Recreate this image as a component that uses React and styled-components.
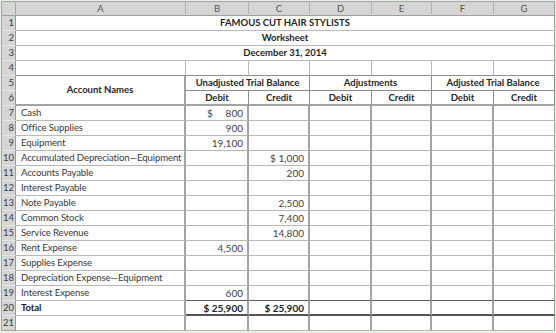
import React from "react";
import styled, { createGlobalStyle } from "styled-components";

const GlobalStyle = createGlobalStyle`
  html, body {
    margin: 0;
    background: #e5f1e1;
  }
  body {
    padding: 1px 0 0 1px;
    font-family: Lato, "Open Sans", sans-serif;
  }
`;

const columns = ["A", "B", "C", "D", "E", "F", "G"];

const accounts = [
  { name: "Cash", debit: "800", debitSign: true },
  { name: "Office Supplies", debit: "900" },
  { name: "Equipment", debit: "19,100" },
  { name: "Accumulated Depreciation—Equipment", credit: "1,000", creditSign: true },
  { name: "Accounts Payable", credit: "200" },
  { name: "Interest Payable" },
  { name: "Note Payable", credit: "2,500" },
  { name: "Common Stock", credit: "7,400" },
  { name: "Service Revenue", credit: "14,800" },
  { name: "Rent Expense", debit: "4,500" },
  { name: "Supplies Expense" },
  { name: "Depreciation Expense—Equipment" },
  { name: "Interest Expense", debit: "600" },
];

const lineColor = {
  thin: "1px solid #b9b9b9",
  head: "1px solid #8e8e8e",
  underline: "1px solid #5c5c5c",
  total: "2px solid #555",
  split: "2px solid #a3a3a3",
};

function Amount({ value, sign, bold, last, rule }) {
  return (
    <Num $bold={bold} $last={last} $rule={rule} $sign={sign}>
      {sign && <span>$</span>}
      <span>{value}</span>
    </Num>
  );
}

function DataRow({ n, account, rule }) {
  return (
    <>
      <RowNum>{n}</RowNum>
      <Label $rule="thin">{account.name}</Label>
      <Amount value={account.debit} sign={account.debitSign} rule={rule} />
      <Amount value={account.credit} sign={account.creditSign} rule={rule} />
      <Num $rule={rule} />
      <Num $rule={rule} />
      <Num $rule={rule} />
      <Num $rule={rule} $last />
    </>
  );
}

export default function App() {
  return (
    <>
      <GlobalStyle />
      <Sheet>
        <Corner />
        {columns.map((c, i) => (
          <ColHead key={c} $last={i === columns.length - 1}>
            {c}
          </ColHead>
        ))}

        <RowNum>1</RowNum>
        <Title>FAMOUS CUT HAIR STYLISTS</Title>
        <RowNum>2</RowNum>
        <Title>Worksheet</Title>
        <RowNum>3</RowNum>
        <Title>December 31, 2014</Title>

        <RowNum>4</RowNum>
        {columns.map((c, i) => (
          <Blank key={c} $last={i === columns.length - 1} />
        ))}

        <RowNum>5</RowNum>
        <Head $rows={2} $wide>Account Names</Head>
        <Head $span={2}>Unadjusted Trial Balance</Head>
        <Head $span={2}>Adjustments</Head>
        <Head $span={2} $last>Adjusted Trial Balance</Head>

        <RowNum>6</RowNum>
        <Head $sub>Debit</Head>
        <Head $sub>Credit</Head>
        <Head $sub>Debit</Head>
        <Head $sub>Credit</Head>
        <Head $sub>Debit</Head>
        <Head $sub $last>Credit</Head>

        {accounts.map((a, i) => (
          <DataRow
            key={a.name}
            n={i + 7}
            account={a}
            rule={i === accounts.length - 1 ? "underline" : "thin"}
          />
        ))}

        <RowNum>20</RowNum>
        <Label $bold $rule="thin">Total</Label>
        <Amount value="$ 25,900" bold rule="total" />
        <Amount value="$ 25,900" bold rule="total" />
        <Num $rule="total" />
        <Num $rule="total" />
        <Num $rule="total" />
        <Num $rule="total" $last />

        <RowNum $end>21</RowNum>
        <Label $rule="thin" />
        <Num $rule="thin" />
        <Num $rule="thin" />
        <Num $rule="thin" />
        <Num $rule="thin" />
        <Num $rule="thin" />
        <Num $rule="thin" $last />
      </Sheet>
    </>
  );
}

const Sheet = styled.div`
  display: grid;
  grid-template-columns: 14px 170px 63px 61px 62px 60px 62px 61px;
  grid-template-rows: 14px repeat(21, 15px);
  width: max-content;
  border-top: 1px solid #a6a6a6;
  border-left: 1px solid #a6a6a6;
  background: #fff;
  color: #3a3a3a;
  font-size: 10px;
  line-height: 1;

  > * {
    box-sizing: border-box;
    min-width: 0;
    white-space: nowrap;
  }
`;

const Corner = styled.div`
  background: #d5d5d5;
  border-right: 1px solid #a9a9a9;
  border-bottom: 1px solid #a0a0a0;
`;

const ColHead = styled.div`
  display: flex;
  align-items: center;
  justify-content: center;
  background: #d5d5d5;
  color: #555;
  font-size: 9.5px;
  border-right: 1px solid ${(p) => (p.$last ? "#a0a0a0" : "#b3b3b3")};
  border-bottom: 1px solid #a0a0a0;
`;

const RowNum = styled.div`
  display: flex;
  align-items: center;
  justify-content: flex-end;
  padding-right: 1px;
  background: #d5d5d5;
  color: #3d3d3d;
  font-size: 9.5px;
  border-right: 1px solid #9b9b9b;
  border-bottom: 1px solid ${(p) => (p.$end ? "#a0a0a0" : "#e6e6e6")};
`;

const Title = styled.div`
  grid-column: span 7;
  display: flex;
  align-items: center;
  justify-content: center;
  font-weight: 700;
  color: #262626;
  font-size: 9.5px;
  border-right: 1px solid #a0a0a0;
  border-bottom: 1px solid #b9b9b9;
`;

const Blank = styled.div`
  border-right: 1px solid ${(p) => (p.$last ? "#a0a0a0" : "#b9b9b9")};
  border-bottom: ${lineColor.head};
`;

const Head = styled.div`
  grid-column: span ${(p) => p.$span || 1};
  grid-row: span ${(p) => p.$rows || 1};
  display: flex;
  align-items: center;
  justify-content: center;
  font-weight: 700;
  color: #262626;
  font-size: 9.5px;
  border-right: ${(p) => (p.$wide ? lineColor.split : lineColor.head)};
  border-bottom: ${(p) => (p.$sub || p.$wide ? lineColor.split : lineColor.head)};
`;

const Label = styled.div`
  display: flex;
  align-items: center;
  padding-left: 5px;
  font-size: 9.6px;
  letter-spacing: -0.12px;
  font-weight: ${(p) => (p.$bold ? 700 : 400)};
  color: ${(p) => (p.$bold ? "#222" : "#3a3a3a")};
  border-right: ${lineColor.split};
  border-bottom: ${(p) => lineColor[p.$rule]};
`;

const Num = styled.div`
  display: flex;
  align-items: center;
  justify-content: ${(p) => (p.$sign ? "space-between" : "flex-end")};
  padding: 0 4px 0 ${(p) => (p.$sign ? "21px" : "4px")};
  font-weight: ${(p) => (p.$bold ? 700 : 400)};
  color: ${(p) => (p.$bold ? "#222" : "#444")};
  border-right: ${(p) => (p.$last ? "1px solid #a0a0a0" : lineColor.split)};
  border-bottom: ${(p) => lineColor[p.$rule]};
`;
